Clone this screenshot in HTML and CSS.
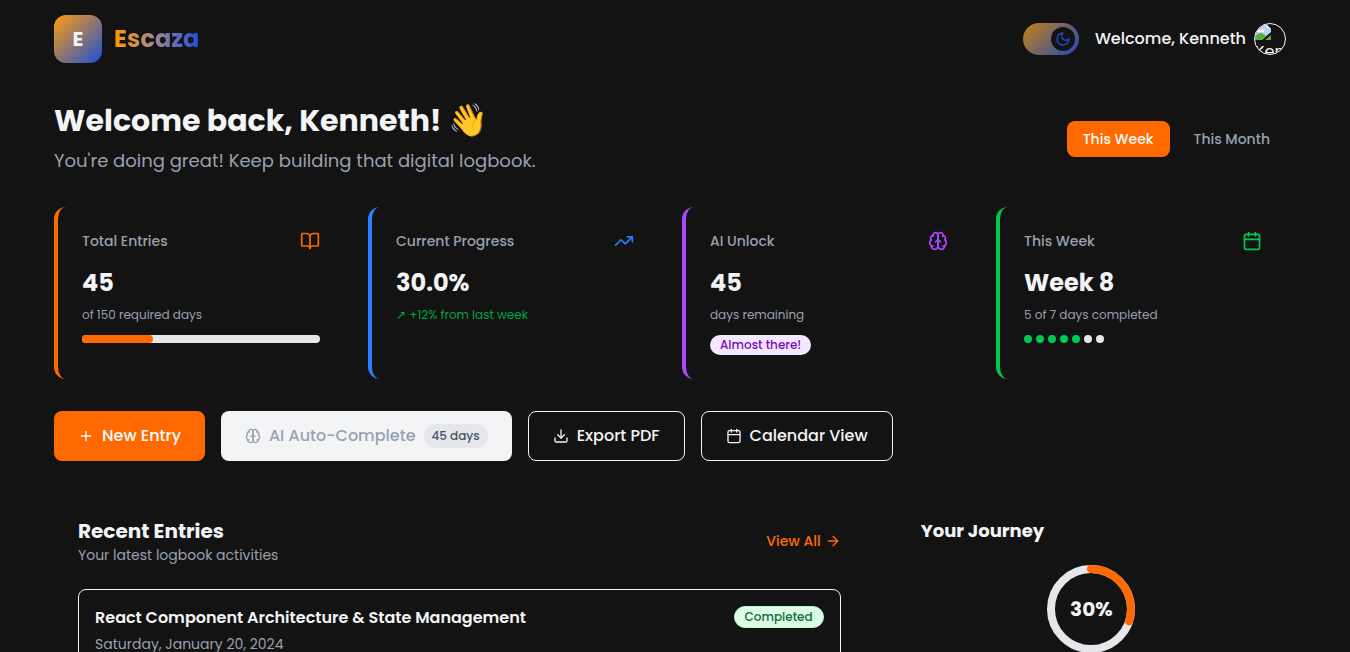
FILE: index.html
```html
<!DOCTYPE html>
<html lang="en">
<head>
<meta charset="utf-8">
<meta name="viewport" content="width=device-width, initial-scale=1">
<title>Escaza – Dashboard</title>
<link rel="stylesheet" href="styles.css">
</head>
<body>
<svg class="sprite" aria-hidden="true">
  <symbol id="i-book" viewBox="0 0 24 24"><path d="M12 7v14"/><path d="M3 18a1 1 0 0 1-1-1V4a1 1 0 0 1 1-1h5a4 4 0 0 1 4 4 4 4 0 0 1 4-4h5a1 1 0 0 1 1 1v13a1 1 0 0 1-1 1h-6a3 3 0 0 0-3 3 3 3 0 0 0-3-3z"/></symbol>
  <symbol id="i-trend" viewBox="0 0 24 24"><path d="M22 7 13.5 15.5l-5-5L2 17"/><path d="M16 7h6v6"/></symbol>
  <symbol id="i-brain" viewBox="0 0 24 24"><path d="M12 5a3 3 0 1 0-5.997.125 4 4 0 0 0-2.526 5.77 4 4 0 0 0 .556 6.588A4 4 0 1 0 12 18Z"/><path d="M12 5a3 3 0 1 1 5.997.125 4 4 0 0 1 2.526 5.77 4 4 0 0 1-.556 6.588A4 4 0 1 1 12 18Z"/><path d="M15 13a4.500 4.500 0 0 1-3-4 4.500 4.500 0 0 1-3 4"/><path d="M17.599 6.500a3 3 0 0 0 .399-1.375"/><path d="M6.003 5.125A3 3 0 0 0 6.401 6.500"/><path d="M3.477 10.896a4 4 0 0 1 .585-.396"/><path d="M19.938 10.500a4 4 0 0 1 .585.396"/><path d="M6 18a4 4 0 0 1-1.967-.516"/><path d="M19.967 17.484A4 4 0 0 1 18 18"/></symbol>
  <symbol id="i-calendar" viewBox="0 0 24 24"><path d="M8 2v4"/><path d="M16 2v4"/><rect width="18" height="18" x="3" y="4" rx="2"/><path d="M3 10h18"/></symbol>
  <symbol id="i-plus" viewBox="0 0 24 24"><path d="M5 12h14"/><path d="M12 5v14"/></symbol>
  <symbol id="i-download" viewBox="0 0 24 24"><path d="M21 15v4a2 2 0 0 1-2 2H5a2 2 0 0 1-2-2v-4"/><path d="m7 10 5 5 5-5"/><path d="M12 15V3"/></symbol>
  <symbol id="i-arrow" viewBox="0 0 24 24"><path d="M5 12h14"/><path d="m12 5 7 7-7 7"/></symbol>
  <symbol id="i-moon" viewBox="0 0 24 24"><path d="M12 3a6 6 0 0 0 9 9 9 9 0 1 1-9-9Z"/></symbol>
</svg>

<header class="container topbar">
  <div class="brand">
    <span class="brand-mark">E</span>
    <span class="brand-name">Escaza</span>
  </div>
  <div class="account">
    <button class="theme-toggle" type="button" aria-label="Toggle theme"><span class="knob"><svg class="icon icon-sm"><use href="#i-moon"/></svg></span></button>
    <span class="greeting">Welcome, Kenneth</span>
    <span class="avatar">
      <svg class="missing" viewBox="0 0 16 16" aria-hidden="true">
        <path d="M0 0h11l5 5v3l-9 8H0z" fill="#c5d5f5"/>
        <path d="M2 8c0-3 3-3 4-2 2-1 3 0 3 2z" fill="#fff"/>
        <path d="M0 16v-2c2-5 6-7 11-2l-4 4z" fill="#5aae3c"/>
        <path d="M10 16l6-5v5z" fill="#5aae3c"/>
        <path d="M11 0v5h5z" fill="#fff" stroke="#aab2c0" stroke-width=".6"/>
      </svg>
      <span class="avatar-alt">Kenneth</span>
    </span>
  </div>
</header>

<main class="container content">
  <section class="hero">
    <div class="hero-text">
      <h1>Welcome back, Kenneth! <span class="wave">👋</span></h1>
      <p>You're doing great! Keep building that digital logbook.</p>
    </div>
    <div class="range">
      <button class="range-btn active" type="button">This Week</button>
      <button class="range-btn" type="button">This Month</button>
    </div>
  </section>

  <section class="stats">
    <article class="stat orange">
      <div class="stat-head"><h2>Total Entries</h2><svg class="icon icon-md"><use href="#i-book"/></svg></div>
      <p class="value">45</p>
      <p class="note">of 150 required days</p>
      <div class="bar"><div class="bar-fill" style="width:30%"></div></div>
    </article>
    <article class="stat blue">
      <div class="stat-head"><h2>Current Progress</h2><svg class="icon icon-md"><use href="#i-trend"/></svg></div>
      <p class="value">30.0%</p>
      <p class="note positive">↗ +12% from last week</p>
    </article>
    <article class="stat purple">
      <div class="stat-head"><h2>AI Unlock</h2><svg class="icon icon-md"><use href="#i-brain"/></svg></div>
      <p class="value">45</p>
      <p class="note">days remaining</p>
      <span class="pill pill-purple">Almost there!</span>
    </article>
    <article class="stat green">
      <div class="stat-head"><h2>This Week</h2><svg class="icon icon-md"><use href="#i-calendar"/></svg></div>
      <p class="value">Week 8</p>
      <p class="note">5 of 7 days completed</p>
      <div class="dots"><i class="on"></i><i class="on"></i><i class="on"></i><i class="on"></i><i class="on"></i><i></i><i></i></div>
    </article>
  </section>

  <section class="actions">
    <button class="btn primary" type="button"><svg class="icon icon-sm"><use href="#i-plus"/></svg>New Entry</button>
    <button class="btn muted" type="button" disabled><svg class="icon icon-sm"><use href="#i-brain"/></svg>AI Auto-Complete<span class="pill pill-gray">45 days</span></button>
    <button class="btn outline" type="button"><svg class="icon icon-sm"><use href="#i-download"/></svg>Export PDF</button>
    <button class="btn outline" type="button"><svg class="icon icon-sm"><use href="#i-calendar"/></svg>Calendar View</button>
  </section>

  <div class="columns">
    <section class="panel recent">
      <div class="panel-head">
        <div>
          <h2>Recent Entries</h2>
          <p>Your latest logbook activities</p>
        </div>
        <a class="view-all" href="#">View All<svg class="icon icon-sm"><use href="#i-arrow"/></svg></a>
      </div>
      <article class="entry">
        <div>
          <h3>React Component Architecture &amp; State Management</h3>
          <p>Saturday, January 20, 2024</p>
        </div>
        <span class="pill pill-green">Completed</span>
      </article>
    </section>
    <section class="panel journey">
      <h2>Your Journey</h2>
      <div class="ring">
        <svg viewBox="0 0 96 96" aria-hidden="true">
          <circle cx="48" cy="48" r="40" stroke="#e5e7eb"/>
          <circle cx="48" cy="48" r="40" stroke="#ff6900" stroke-linecap="round" pathLength="100" stroke-dasharray="30 100" transform="rotate(-90 48 48)"/>
        </svg>
        <span>30%</span>
      </div>
    </section>
  </div>
</main>
</body>
</html>
```
FILE: styles.css
```css
* {
  box-sizing: border-box;
  margin: 0;
  padding: 0;
}

body {
  height: 100vh;
  overflow: hidden;
  padding-right: 10px;
  background: #131313;
  color: #f3f4f6;
  font-family: Poppins, sans-serif;
  font-size: 16px;
  line-height: 24px;
}

button {
  font: inherit;
  color: inherit;
  border: 0;
  background: none;
  cursor: pointer;
}

.sprite {
  display: none;
}

.icon {
  flex: none;
  fill: none;
  stroke: currentColor;
  stroke-width: 2;
  stroke-linecap: round;
  stroke-linejoin: round;
}

.icon-sm {
  width: 16px;
  height: 16px;
}

.icon-md {
  width: 20px;
  height: 20px;
}

.container {
  max-width: 1280px;
  margin: 0 auto;
  padding-left: 24px;
  padding-right: 24px;
}

/* Top bar */
.topbar {
  display: flex;
  align-items: center;
  justify-content: space-between;
  padding-top: 15px;
  padding-bottom: 15px;
}

.brand {
  display: flex;
  align-items: center;
  gap: 12px;
}

.brand-mark {
  display: grid;
  place-items: center;
  width: 48px;
  height: 48px;
  border-radius: 12px;
  background: linear-gradient(135deg, #ff9f0a, #1d4ed8);
  font-size: 20px;
  font-weight: 700;
}

.brand-name {
  font-size: 24px;
  line-height: 32px;
  font-weight: 700;
  background: linear-gradient(90deg, #ff9800, #a98a8c 45%, #1d4fe4);
  background-clip: text;
  color: transparent;
}

.account {
  display: flex;
  align-items: center;
  gap: 8px;
}

.theme-toggle {
  display: flex;
  align-items: center;
  justify-content: flex-end;
  width: 56px;
  height: 32px;
  margin-right: 8px;
  padding: 4px;
  border-radius: 16px;
  background: linear-gradient(135deg, #c9820f, #1f47ba);
}

.knob {
  display: grid;
  place-items: center;
  width: 24px;
  height: 24px;
  border-radius: 50%;
  background: #131313;
  color: #1d4ed8;
}

.greeting {
  font-weight: 500;
}

.avatar {
  width: 32px;
  height: 32px;
  border: 1px solid #f3f4f6;
  border-radius: 50%;
  overflow: hidden;
}

.missing,
.avatar-alt {
  display: block;
}

.missing {
  width: 16px;
  height: 16px;
}

/* Greeting row */
.content {
  display: flex;
  flex-direction: column;
  gap: 32px;
  padding-top: 25px;
}

.hero {
  display: flex;
  align-items: center;
  justify-content: space-between;
}

.hero-text {
  display: grid;
  gap: 8px;
}

h1 {
  font-size: 30px;
  line-height: 36px;
  font-weight: 700;
}

.wave {
  font-size: 32px;
  line-height: 32px;
}

.hero-text p {
  font-size: 18px;
  line-height: 28px;
  color: #99a1af;
}

.range {
  display: flex;
  gap: 8px;
}

.range-btn {
  padding: 8px 16px;
  border-radius: 8px;
  font-size: 14px;
  line-height: 20px;
  font-weight: 500;
  color: #99a1af;
}

.range-btn.active {
  background: #ff6900;
  color: #fff;
}

/* Stat cards */
.stats {
  display: grid;
  grid-template-columns: repeat(4, 1fr);
  gap: 24px;
}

.stat {
  min-height: 172px;
  padding: 24px;
  border-left: 4px solid currentColor;
  border-radius: 12px;
}

.orange { color: #ff6900; }
.blue { color: #2b7fff; }
.purple { color: #ad46ff; }
.green { color: #00c950; }

.stat-head {
  display: flex;
  align-items: center;
  justify-content: space-between;
  margin-bottom: 16px;
}

.stat-head h2 {
  font-size: 14px;
  line-height: 20px;
  font-weight: 500;
  color: #99a1af;
}

.value {
  margin-bottom: 8px;
  font-size: 24px;
  line-height: 32px;
  font-weight: 700;
  color: #f3f4f6;
}

.note {
  margin-bottom: 12px;
  font-size: 12px;
  line-height: 16px;
  color: #99a1af;
}

.note.positive {
  color: #00a63e;
}

.bar {
  height: 8px;
  border-radius: 4px;
  background: #e5e7eb;
}

.bar-fill {
  height: 100%;
  border-radius: 4px;
  background: #ff6900;
}

.dots {
  display: flex;
  gap: 4px;
}

.dots i {
  width: 8px;
  height: 8px;
  border-radius: 50%;
  background: #e5e7eb;
}

.dots .on {
  background: #00c950;
}

.pill {
  display: block;
  width: fit-content;
  padding: 2px 10px;
  border-radius: 12px;
  font-size: 12px;
  line-height: 16px;
  font-weight: 500;
}

.pill-purple {
  background: #f3e8ff;
  color: #7710bb;
}

.pill-gray {
  padding: 4px 8px;
  background: #e5e7eb;
  color: #4a5565;
}

.pill-green {
  flex: none;
  border: 1px solid #b9f8cf;
  background: #dcfce7;
  color: #0d7035;
}

/* Action buttons */
.actions {
  display: flex;
  flex-wrap: wrap;
  gap: 16px;
}

.btn {
  display: flex;
  align-items: center;
  gap: 8px;
  min-height: 50px;
  padding: 12px 24px;
  border-radius: 8px;
  font-weight: 500;
}

.primary {
  background: #ff6900;
  color: #fff;
}

.muted {
  background: #f3f4f6;
  color: #99a1af;
}

.outline {
  border: 1px solid #f3f4f6;
}

/* Lower panels */
.columns {
  display: grid;
  grid-template-columns: repeat(3, 1fr);
  gap: 32px;
}

.recent {
  grid-column: span 2;
}

.panel {
  padding: 24px;
}

.panel-head {
  display: flex;
  align-items: center;
  justify-content: space-between;
  margin-bottom: 24px;
}

.panel-head h2 {
  font-size: 20px;
  line-height: 28px;
  font-weight: 700;
}

.panel-head p,
.entry p {
  font-size: 14px;
  line-height: 20px;
  color: #99a1af;
}

.view-all {
  display: flex;
  align-items: center;
  gap: 4px;
  font-size: 14px;
  line-height: 20px;
  font-weight: 500;
  color: #ff6900;
  text-decoration: none;
}

.entry {
  display: flex;
  align-items: flex-start;
  justify-content: space-between;
  padding: 16px;
  border: 1px solid #f3f4f6;
  border-radius: 8px;
}

.entry h3 {
  margin-bottom: 4px;
  font-size: 16px;
  line-height: 24px;
  font-weight: 600;
}

.journey h2 {
  margin-bottom: 16px;
  font-size: 18px;
  line-height: 28px;
  font-weight: 700;
}

.ring {
  display: grid;
  place-items: center;
}

.ring > * {
  grid-area: 1 / 1;
}

.ring svg {
  width: 96px;
  height: 96px;
  fill: none;
  stroke-width: 8;
}

.ring span {
  font-size: 20px;
  line-height: 28px;
  font-weight: 700;
}
```
